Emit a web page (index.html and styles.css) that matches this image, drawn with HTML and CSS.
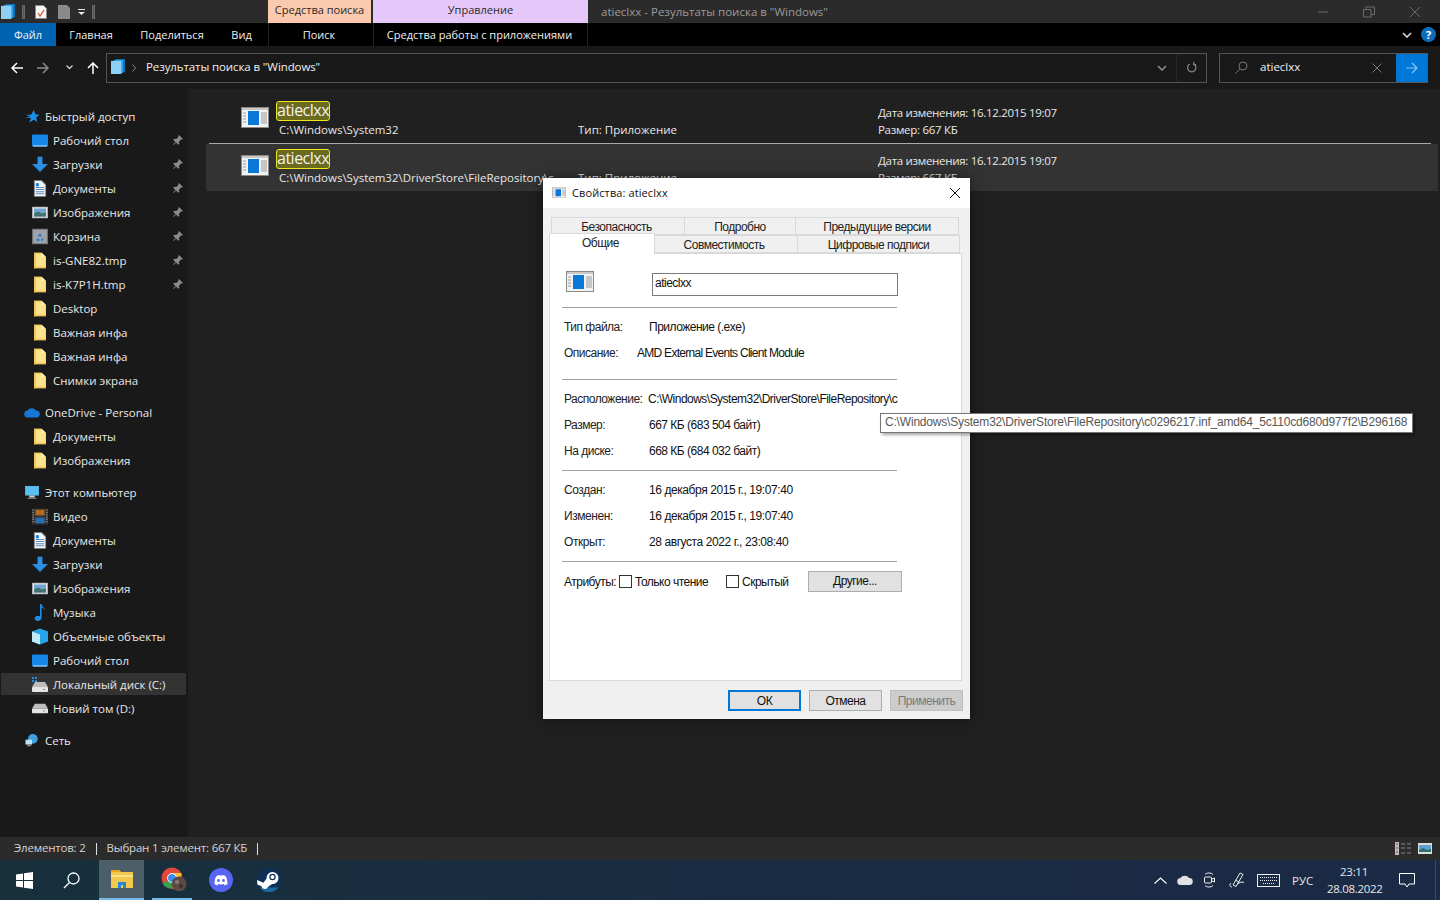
FILE: index.html
```html
<!DOCTYPE html>
<html lang="ru">
<head>
<meta charset="utf-8">
<title>Результаты поиска</title>
<link rel="stylesheet" href="styles.css">
</head>
<body>
<svg class="defs" aria-hidden="true">
  <symbol id="app" viewBox="0 0 28 21">
    <rect x="0.5" y="0.5" width="27" height="20" fill="#f2f2f2" stroke="#8a8a8a"/>
    <rect x="1" y="1" width="26" height="2" fill="#c9c9c9"/>
    <rect x="7" y="4" width="11" height="14" fill="#0a78d8"/>
    <path d="M2 6h3M2 9h3M2 12h3M2 15h3M20 6h6M20 8h6M20 10h6M20 12h6M20 14h6M20 16h6" stroke="#9a9a9a"/>
  </symbol>
  <symbol id="folder" viewBox="0 0 16 20">
    <path d="M1 1h9l5 5v13H1z" fill="#fde28c"/>
    <path d="M1 1h9v1H3v17H1z" fill="#f0c050"/>
    <path d="M10 1l5 5h-5z" fill="#fff0bd"/>
    <rect x="1" y="17.500" width="14" height="1.500" fill="#f0c050"/>
  </symbol>
  <symbol id="pin" viewBox="0 0 12 12">
    <path d="M7 1l4 4-1 .6-1 0-2 2.200.3 2-1 1L4 8.600 1.500 11 1 10.500 3.400 8 1.200 5.800l1-1 2 .3L6.400 3V2z" fill="#8c8c8c"/>
  </symbol>
  <symbol id="desk" viewBox="0 0 16 14">
    <rect x="0" y="1" width="16" height="12" rx="1" fill="#1787e8"/>
    <path d="M1 12h14v1H1z" fill="#bfe2ff"/>
  </symbol>
  <symbol id="down" viewBox="0 0 16 16">
    <path d="M5.500 0h5v7.500H16L8 15.500 0 7.500h5.500z" fill="#2d8fe4"/>
  </symbol>
  <symbol id="doc" viewBox="0 0 12 16">
    <path d="M.5.500h7l4 4v11H.5z" fill="#f4f4f4" stroke="#777"/>
    <path d="M2 7h8M2 9h8M2 11h8M2 13h8" stroke="#5a8fc0"/>
    <rect x="2" y="3" width="3" height="3" fill="#1787e8"/>
  </symbol>
  <symbol id="pic" viewBox="0 0 16 12">
    <rect x=".5" y=".5" width="15" height="11" fill="#e8e8e8" stroke="#aaa"/>
    <rect x="2" y="2" width="12" height="8" fill="#6fa7d2"/>
    <path d="M2 7l4-2 4 2 4-1v4H2z" fill="#41706f"/>
  </symbol>
  <symbol id="bin" viewBox="0 0 14 14">
    <rect x=".5" y=".5" width="13" height="13" fill="#a0a4a8" stroke="#6e7174"/>
    <path d="M7 4l2 3H5zM4 9h2.500v2H4zM8 9h2.500L9 11H8z" fill="#1b7fd4"/>
  </symbol>
  <symbol id="hdd" viewBox="0 0 16 10">
    <path d="M3 0h10l3 5H0z" fill="#bdbdbd"/>
    <rect x="0" y="5" width="16" height="5" rx="1" fill="#e5e5e5"/>
    <rect x="11" y="7" width="2" height="1" fill="#4caf50"/>
  </symbol>
  <symbol id="stack" viewBox="0 0 16 16">
    <rect x="5" y="0" width="10" height="14" fill="#0d6fb8"/>
    <rect x="3" y="1" width="10" height="14" fill="#2d9be6"/>
    <rect x="0" y="2" width="11" height="14" fill="#8fd0f7"/>
  </symbol>
</svg>

<div class="screen">
  <header class="titlebar">
    <div class="qat">
      <svg class="i16" viewBox="0 0 16 16"><use href="#stack"/></svg>
      <span class="qat-sep"></span>
      <svg class="qat-doc" viewBox="0 0 12 14"><path d="M.5.500h8l3 3v10H.5z" fill="#f6f6f6" stroke="#888"/><path d="M3 8l2 3 4-6" fill="none" stroke="#e2562b" stroke-width="1.300"/></svg>
      <svg class="qat-doc" viewBox="0 0 12 14"><path d="M0 0h9l3 3v11H0z" fill="#8a8a8a"/></svg>
      <svg class="qat-more" viewBox="0 0 7 6"><path d="M0 0h7v1H0zM0 3h7L3.500 6z" fill="#e8e8e8"/></svg>
      <span class="qat-sep"></span>
    </div>
    <div class="ctx ctx-search">Средства поиска</div>
    <div class="ctx ctx-manage">Управление</div>
    <div class="win-title">atieclxx - Результаты поиска в "Windows"</div>
    <div class="win-ctrls">
      <svg class="ctl" viewBox="0 0 12 12"><path d="M1 6h10" stroke="#6b6b6b"/></svg>
      <svg class="ctl" viewBox="0 0 12 12"><path d="M.5 3.500h7.500v7.500H.5zM3 3.500V1h8.500v7.500H8" fill="none" stroke="#6b6b6b"/></svg>
      <svg class="ctl" viewBox="0 0 12 12"><path d="M1 1l10 10M11 1L1 11" stroke="#6b6b6b"/></svg>
    </div>
  </header>

  <nav class="ribbon">
    <div class="rtab rtab-file">Файл</div>
    <div class="rtab rtab-home">Главная</div>
    <div class="rtab rtab-share">Поделиться</div>
    <div class="rtab rtab-view">Вид</div>
    <div class="rtab rtab-find">Поиск</div>
    <div class="rtab rtab-tools">Средства работы с приложениями</div>
    <div class="ribbon-right">
      <svg class="chev" viewBox="0 0 10 6"><path d="M1 1l4 4 4-4" fill="none" stroke="#d8d8d8" stroke-width="1.600"/></svg>
      <span class="help">?</span>
    </div>
  </nav>

  <div class="addr-bar">
    <div class="nav-btns">
      <svg class="arrow" viewBox="0 0 12 12"><path d="M12 6H1M6 1L1 6l5 5" fill="none" stroke="#fff" stroke-width="1.500"/></svg>
      <svg class="arrow arrow-fwd" viewBox="0 0 12 12"><path d="M0 6h11M6 1l5 5-5 5" fill="none" stroke="#8a8a8a" stroke-width="1.500"/></svg>
      <svg class="arrow-drop" viewBox="0 0 7 5"><path d="M.5.500l3 3 3-3" fill="none" stroke="#d0d0d0" stroke-width="1.300"/></svg>
      <svg class="arrow arrow-up" viewBox="0 0 12 12"><path d="M6 12V1M1 6l5-5 5 5" fill="none" stroke="#fff" stroke-width="1.500"/></svg>
    </div>
    <div class="addr">
      <svg class="addr-icon" viewBox="0 0 16 16"><use href="#stack"/></svg>
      <svg class="addr-sep" viewBox="0 0 4 8"><path d="M.5.500L3.500 4l-3 3.500" fill="none" stroke="#8a8a8a"/></svg>
      <span class="addr-text">Результаты поиска в "Windows"</span>
      <svg class="addr-drop" viewBox="0 0 10 6"><path d="M1 1l4 4 4-4" fill="none" stroke="#8a8a8a" stroke-width="1.600"/></svg>
      <span class="addr-refresh"><svg viewBox="0 0 12 12"><path d="M4 2.300a4.500 4.500 0 1 0 4.500 0M8.500 0v2.800H11" fill="none" stroke="#8a8a8a" stroke-width="1.300"/></svg></span>
    </div>
    <div class="search">
      <svg class="search-icon" viewBox="0 0 13 13"><circle cx="8" cy="5" r="4" fill="none" stroke="#777"/><path d="M5 8l-4.500 4.500" stroke="#777"/></svg>
      <span class="search-text">atieclxx</span>
      <svg class="search-x" viewBox="0 0 10 10"><path d="M.5.500l9 9M9.500.500l-9 9" stroke="#777"/></svg>
      <span class="search-go"><svg viewBox="0 0 12 12"><path d="M0 6h11M6 1l5 5-5 5" fill="none" stroke="#8cc4f2" stroke-width="1.200"/></svg></span>
    </div>
  </div>

  <div class="body">
    <aside class="sidebar">
      <div class="group">
        <div class="tree head"><svg class="hi" viewBox="0 0 16 14"><path d="M10 0l1.500 4.500L16 5l-3.500 3 1.200 5L10 10.500 5 13.500l2-5-7-.5 6-.8L1.500 5 7 5z" fill="#1f8fe8"/></svg><span>Быстрый доступ</span></div>
        <div class="tree"><svg class="si" viewBox="0 0 16 14"><use href="#desk"/></svg><span class="lbl">Рабочий стол</span><svg class="pin" viewBox="0 0 12 12"><use href="#pin"/></svg></div>
        <div class="tree"><svg class="si" viewBox="0 0 16 16"><use href="#down"/></svg><span class="lbl">Загрузки</span><svg class="pin" viewBox="0 0 12 12"><use href="#pin"/></svg></div>
        <div class="tree"><svg class="si" viewBox="0 0 12 16"><use href="#doc"/></svg><span class="lbl">Документы</span><svg class="pin" viewBox="0 0 12 12"><use href="#pin"/></svg></div>
        <div class="tree"><svg class="si" viewBox="0 0 16 12"><use href="#pic"/></svg><span class="lbl">Изображения</span><svg class="pin" viewBox="0 0 12 12"><use href="#pin"/></svg></div>
        <div class="tree"><svg class="si" viewBox="0 0 14 14"><use href="#bin"/></svg><span class="lbl">Корзина</span><svg class="pin" viewBox="0 0 12 12"><use href="#pin"/></svg></div>
        <div class="tree"><svg class="si" viewBox="0 0 16 20"><use href="#folder"/></svg><span class="lbl">is-GNE82.tmp</span><svg class="pin" viewBox="0 0 12 12"><use href="#pin"/></svg></div>
        <div class="tree"><svg class="si" viewBox="0 0 16 20"><use href="#folder"/></svg><span class="lbl">is-K7P1H.tmp</span><svg class="pin" viewBox="0 0 12 12"><use href="#pin"/></svg></div>
        <div class="tree"><svg class="si" viewBox="0 0 16 20"><use href="#folder"/></svg><span class="lbl">Desktop</span></div>
        <div class="tree"><svg class="si" viewBox="0 0 16 20"><use href="#folder"/></svg><span class="lbl">Важная инфа</span></div>
        <div class="tree"><svg class="si" viewBox="0 0 16 20"><use href="#folder"/></svg><span class="lbl">Важная инфа</span></div>
        <div class="tree"><svg class="si" viewBox="0 0 16 20"><use href="#folder"/></svg><span class="lbl">Снимки экрана</span></div>
      </div>
      <div class="group">
        <div class="tree head"><svg class="hi" viewBox="0 0 16 10"><path d="M4 10a3.500 3.500 0 0 1-.5-7A5 5 0 0 1 12 3a3.500 3.500 0 0 1 .5 7z" fill="#1478d4"/></svg><span>OneDrive - Personal</span></div>
        <div class="tree"><svg class="si" viewBox="0 0 16 20"><use href="#folder"/></svg><span class="lbl">Документы</span></div>
        <div class="tree"><svg class="si" viewBox="0 0 16 20"><use href="#folder"/></svg><span class="lbl">Изображения</span></div>
      </div>
      <div class="group">
        <div class="tree head"><svg class="hi" viewBox="0 0 16 15"><rect x="0" y="0" width="16" height="11" fill="#58c0f0"/><path d="M5 11h6v2H5zM3 13.500h10v1H3z" fill="#cfd6da"/></svg><span>Этот компьютер</span></div>
        <div class="tree"><svg class="si" viewBox="0 0 14 14"><rect width="14" height="14" fill="#333"/><rect x="3" y="1" width="8" height="5" fill="#b4691f"/><rect x="3" y="8" width="8" height="5" fill="#2a6fb0"/><path d="M1 1v12M13 1v12" stroke="#999" stroke-width="1.200" stroke-dasharray="1 1"/></svg><span class="lbl">Видео</span></div>
        <div class="tree"><svg class="si" viewBox="0 0 12 16"><use href="#doc"/></svg><span class="lbl">Документы</span></div>
        <div class="tree"><svg class="si" viewBox="0 0 16 16"><use href="#down"/></svg><span class="lbl">Загрузки</span></div>
        <div class="tree"><svg class="si" viewBox="0 0 16 12"><use href="#pic"/></svg><span class="lbl">Изображения</span></div>
        <div class="tree"><svg class="si" viewBox="0 0 12 16"><path d="M6 0h1.500c0 3 3.500 3.500 3.500 7 0-2-2-3-3.500-3.500V13c0 1.800-1.600 3-3.500 3S1 15 1 13.500 2.500 11 4 11c.8 0 1.500.2 2 .5z" fill="#1b8fe6"/></svg><span class="lbl">Музыка</span></div>
        <div class="tree"><svg class="si" viewBox="0 0 16 16"><path d="M8 0l8 3v10l-8 3-8-3V3z" fill="#28a4e8"/><path d="M0 3l8 3v10l-8-3z" fill="#bfe9f7"/></svg><span class="lbl">Объемные объекты</span></div>
        <div class="tree"><svg class="si" viewBox="0 0 16 14"><use href="#desk"/></svg><span class="lbl">Рабочий стол</span></div>
        <div class="tree current"><svg class="si" viewBox="0 0 16 15"><path d="M0 0h2v2H0zM3 0h2v2H3zM0 3h2v2H0zM3 3h2v2H3z" fill="#1f8fe8"/><g transform="translate(0 5)"><use href="#hdd" width="16" height="10"/></g></svg><span class="lbl">Локальный диск (C:)</span></div>
        <div class="tree"><svg class="si" viewBox="0 0 16 10"><use href="#hdd"/></svg><span class="lbl">Новий том (D:)</span></div>
      </div>
      <div class="group">
        <div class="tree head"><svg class="hi" viewBox="0 0 16 16"><circle cx="9" cy="6" r="6" fill="#3f9fe0"/><rect x="0" y="7" width="8" height="6" fill="#bfe0f5"/><path d="M2 14h5v1H2z" fill="#ccc"/></svg><span>Сеть</span></div>
      </div>
    </aside>

    <main class="results">
      <div class="item">
        <svg class="item-icon" viewBox="0 0 28 21"><use href="#app"/></svg>
        <div class="item-name"><mark class="hit">atieclxx</mark><div class="item-path">C:\Windows\System32</div></div>
        <div class="item-type">Тип: Приложение</div>
        <div class="item-meta"><div>Дата изменения: 16.12.2015 19:07</div><div>Размер: 667 КБ</div></div>
      </div>
      <div class="item-line"></div>
      <div class="item item-selected">
        <svg class="item-icon" viewBox="0 0 28 21"><use href="#app"/></svg>
        <div class="item-name"><mark class="hit">atieclxx</mark><div class="item-path">C:\Windows\System32\DriverStore\FileRepository\c</div></div>
        <div class="item-type">Тип: Приложение</div>
        <div class="item-meta"><div>Дата изменения: 16.12.2015 19:07</div><div>Размер: 667 КБ</div></div>
      </div>
    </main>
  </div>

  <footer class="status">
    <span class="st-count">Элементов: 2</span>
    <span class="st-sep"></span>
    <span class="st-sel">Выбран 1 элемент: 667 КБ</span>
    <span class="st-sep"></span>
    <div class="st-views">
      <svg class="st-list" viewBox="0 0 16 13"><rect x="0" y="0" width="4" height="13" fill="#bbb"/><path d="M1 2h2M1 6h2M1 10h2" stroke="#a33"/><path d="M6 2h4M12 2h4M6 6h4M12 6h4M6 11h4M12 11h4" stroke="#888"/></svg>
      <svg class="st-pic" viewBox="0 0 14 11"><rect width="14" height="11" fill="#ddd"/><rect x="1" y="2" width="12" height="7" fill="#5fa0cf"/><path d="M1 7l4-2 4 2 4-1v3H1z" fill="#2e6f6f"/></svg>
    </div>
  </footer>

  <div class="taskbar">
    <div class="tb-btn"><svg class="ti-win" viewBox="0 0 17 17"><path d="M0 2.400l7-1V8H0zM8 1.300L17 0v8H8zM0 9h7v6.600l-7-1zM8 9h9v8l-9-1.300z" fill="#fff"/></svg></div>
    <div class="tb-btn tb-search"><svg class="ti-s" viewBox="0 0 17 17"><circle cx="10.500" cy="6.500" r="5.500" fill="none" stroke="#fff" stroke-width="1.300"/><path d="M6.500 10.500L1 16" stroke="#fff" stroke-width="1.500"/></svg></div>
    <div class="tb-app tb-active"><svg class="ti-app" viewBox="0 0 22 20"><path d="M0 1h8l2 2h12v16H0z" fill="#f4c84f"/><path d="M0 1h8l2 2H0z" fill="#e7a820"/><rect x="0" y="6" width="22" height="2" fill="#fbe08a"/><path d="M7 19v-6h8v6h-3v-3H10v3z" fill="#2a87d0"/></svg></div>
    <div class="tb-app tb-open"><svg class="ti-chrome" viewBox="0 0 26 24"><circle cx="11" cy="11" r="10.500" fill="#e3493a"/><path d="M11 11L1.500 16.500A10.500 10.500 0 0 0 11 21.500z" fill="#3aa04a"/><path d="M11 11l9.500 5.500A10.500 10.500 0 0 1 11 21.500zM11 6h9l.7 2L15 14z" fill="#f5c431"/><circle cx="11" cy="11" r="4.500" fill="#3f8df0" stroke="#fff"/><circle cx="18" cy="17" r="7.500" fill="#5b4a45"/><circle cx="16" cy="15" r="2" fill="#8a7a72"/><circle cx="20" cy="19" r="2" fill="#3c302d"/></svg></div>
    <div class="tb-app tb-disc"><svg class="ti-round" viewBox="0 0 24 24"><circle cx="12" cy="12" r="12" fill="#5865f2"/><path d="M5.500 16C5.500 11 7 8 8.500 7.500c1-.4 2-.6 2.500-.6l.5.8h1l.5-.8c.5 0 1.500.2 2.500.6C17 8 18.500 11 18.500 16c-1 1-2.500 1.300-3 1.300l-.8-1.300c-1.600.5-3.800.5-5.400 0l-.8 1.300c-.5 0-2-.3-3-1.300z" fill="#fff"/><circle cx="9.500" cy="12.500" r="1.400" fill="#5865f2"/><circle cx="14.500" cy="12.500" r="1.400" fill="#5865f2"/></svg></div>
    <div class="tb-app tb-steam"><svg class="ti-round" viewBox="0 0 24 24"><circle cx="12" cy="12" r="12" fill="#0d2f58"/><path d="M2.500 19.500A12 12 0 0 0 21.500 19.500z" fill="#1c6aa0"/><path d="M0 12l6.500 2.800 3-4.300A6 6 0 1 1 15 16l-4 3a3.500 3.500 0 0 1-6.600-.8L.4 16.500z" fill="#fff"/><circle cx="15.500" cy="9" r="3.200" fill="#0d2f58"/><circle cx="15.500" cy="9" r="2" fill="#fff"/></svg></div>
    <div class="tray">
      <svg class="tr-up" viewBox="0 0 13 7"><path d="M.5 6.500L6.500 1l6 5.500" fill="none" stroke="#fff" stroke-width="1.100"/></svg>
      <svg class="tr-cloud" viewBox="0 0 16 10"><path d="M4 10a3.500 3.500 0 0 1-.5-7A5 5 0 0 1 12 3a3.500 3.500 0 0 1 .5 7z" fill="#e2e2e2"/></svg>
      <svg class="tr-cam" viewBox="0 0 11 16"><path d="M1 2.500C3 .5 7 .5 9 2.500M1 13.500c2 2 6 2 8 0" fill="none" stroke="#eee"/><rect x=".5" y="5" width="7" height="6" rx="1" fill="none" stroke="#eee"/><path d="M8 7l2.500-1v4L8 9" fill="none" stroke="#eee"/></svg>
      <svg class="tr-pen" viewBox="0 0 16 16"><path d="M3 15c-2 0-3-2-1-4M4 13L11 1l3 1.500L7 14.500zM8 12l4-2 3 .5M6 8l4 2" fill="none" stroke="#eee"/></svg>
      <svg class="tr-kb" viewBox="0 0 23 13"><rect x=".5" y=".5" width="22" height="12" fill="none" stroke="#eee"/><path d="M3 3.500h17M3 6.500h17M6 9.500h11" stroke="#eee" stroke-dasharray="1 1"/></svg>
      <span class="tr-lang">РУС</span>
      <div class="clock"><div>23:11</div><div>28.08.2022</div></div>
      <svg class="tr-note" viewBox="0 0 16 15"><path d="M.5.500h15v10.500h-5.500L8 14 6 11H.5z" fill="none" stroke="#fff"/></svg>
      <span class="tr-show"></span>
    </div>
  </div>

  <section class="dialog">
    <div class="dlg-title">
      <svg class="dlg-ic" viewBox="0 0 28 21"><use href="#app"/></svg>
      <span class="dlg-cap">Свойства: atieclxx</span>
      <svg class="dlg-x" viewBox="0 0 10 10"><path d="M0 0l10 10M10 0L0 10" stroke="#111" stroke-width="1"/></svg>
    </div>
    <div class="dlg-tabs">
      <div class="tabrow tabrow-back">
        <div class="tab t-sec">Безопасность</div>
        <div class="tab t-det">Подробно</div>
        <div class="tab t-prev">Предыдущие версии</div>
      </div>
      <div class="tabrow tabrow-front">
        <div class="tab tab-on">Общие</div>
        <div class="tab t-comp">Совместимость</div>
        <div class="tab t-sig">Цифровые подписи</div>
      </div>
    </div>
    <div class="panel">
      <div class="name-row">
        <svg class="big-ic" viewBox="0 0 28 21"><use href="#app"/></svg>
        <div class="name-box">atieclxx</div>
      </div>
      <hr class="rule">
      <div class="pgroup pg-type">
        <div class="prow"><span class="plabel">Тип файла:</span><span>Приложение (.exe)</span></div>
        <div class="prow"><span class="plabel pl-desc">Описание:</span><span class="pv-desc">AMD External Events Client Module</span></div>
      </div>
      <hr class="rule">
      <div class="pgroup pg-loc">
        <div class="prow"><span class="plabel pl-loc">Расположение:</span><span class="pv-loc">C:\Windows\System32\DriverStore\FileRepository\c</span></div>
        <div class="prow"><span class="plabel">Размер:</span><span>667 КБ (683 504 байт)</span></div>
        <div class="prow"><span class="plabel">На диске:</span><span>668 КБ (684 032 байт)</span></div>
      </div>
      <hr class="rule">
      <div class="pgroup pg-date">
        <div class="prow"><span class="plabel">Создан:</span><span>16 декабря 2015 г., 19:07:40</span></div>
        <div class="prow"><span class="plabel">Изменен:</span><span>16 декабря 2015 г., 19:07:40</span></div>
        <div class="prow"><span class="plabel">Открыт:</span><span>28 августа 2022 г., 23:08:40</span></div>
      </div>
      <hr class="rule">
      <div class="attrs">
        <span class="attr-label">Атрибуты:</span>
        <span class="cb"></span><span class="cb-text cb-ro">Только чтение</span>
        <span class="cb"></span><span class="cb-text cb-hid">Скрытый</span>
        <span class="btn btn-more">Другие...</span>
      </div>
    </div>
    <div class="dlg-btns">
      <span class="btn btn-ok">ОК</span>
      <span class="btn">Отмена</span>
      <span class="btn btn-off">Применить</span>
    </div>
  </section>

  <div class="tip">C:\Windows\System32\DriverStore\FileRepository\c0296217.inf_amd64_5c110cd680d977f2\B296168</div>
</div>
</body>
</html>
```

FILE: styles.css
```css
* { box-sizing: border-box; }
html, body { margin: 0; padding: 0; background: #202020; }
body { font-family: "Open Sans", "Noto Sans", sans-serif; font-size: 11.5px; color: #e8e8e8; }
.defs { position: absolute; width: 0; height: 0; overflow: hidden; }
svg { display: block; flex: none; }

.screen { position: relative; width: 1440px; height: 900px; overflow: hidden; display: flex; flex-direction: column; }

/* Title bar */
.titlebar { height: 23px; background: #2b2b2b; display: flex; align-items: stretch; flex: none; }
.qat { width: 268px; display: flex; align-items: center; padding-left: 1px; }
.i16 { width: 15px; height: 17px; }
.qat-sep { width: 3px; height: 14px; background: #555; border: 1px solid #6a6a6a; border-width: 0 1px; margin-left: 6px; }
.qat-doc { width: 12px; height: 14px; margin-left: 10px; }
.qat-doc + .qat-doc { margin-left: 11px; }
.qat-more { width: 7px; height: 6px; margin-left: 8px; }
.qat-more + .qat-sep { margin-left: 7px; }
.ctx { display: flex; align-items: center; justify-content: center; color: #2a2a2a; font-size: 11px; padding-bottom: 5px; }
.ctx-search { width: 103px; background: #fbc9ae; }
.ctx-manage { width: 215px; margin-left: 2px; background: #e6c7f9; }
.win-title { margin-left: 13px; align-self: center; color: #9a9a9a; }
.win-ctrls { margin-left: auto; display: flex; align-items: center; padding-right: 19px; gap: 34px; }
.ctl { width: 12px; height: 12px; }

/* Ribbon */
.ribbon { height: 23px; background: #000; display: flex; align-items: center; flex: none; position: relative; color: #f0f0f0; font-size: 11px; }
.rtab { height: 23px; display: flex; align-items: center; justify-content: center; }
.rtab-file { width: 56px; background: #0063b1; color: #e8f2fa; }
.rtab-home { margin-left: 14px; width: 42px; }
.rtab-share { margin-left: 29px; width: 62px; }
.rtab-view { margin-left: 29px; width: 19px; }
.rtab-find { margin-left: 17px; width: 105px; border-left: 1px solid #222; padding-right: 4px; }
.rtab-tools { width: 215px; border-left: 1px solid #222; border-right: 1px solid #222; padding-right: 2px; }
.ribbon-right { margin-left: auto; display: flex; align-items: center; gap: 9px; padding-right: 4px; }
.chev { width: 10px; height: 6px; }
.help { width: 15px; height: 15px; border-radius: 50%; background: #0e6cbd; color: #fff; font-weight: 700; font-size: 11px; display: flex; align-items: center; justify-content: center; }

/* Address bar */
.addr-bar { height: 43px; background: #191919; display: flex; align-items: center; flex: none; }
.nav-btns { width: 106px; display: flex; align-items: center; padding-left: 11px; }
.arrow { width: 12px; height: 12px; }
.arrow-fwd { margin-left: 14px; }
.arrow-drop { width: 7px; height: 5px; margin-left: 17px; }
.arrow-up { margin-left: 14px; }
.addr { width: 1101px; height: 30px; border: 1px solid #555; display: flex; align-items: center; padding-left: 4px; }
.addr-icon { width: 15px; height: 15px; margin-top: -3px; }
.addr-sep { width: 4px; height: 8px; margin-left: 6px; }
.addr-text { margin-left: 10px; color: #f0f0f0; padding-bottom: 3px; letter-spacing: -0.1px; }
.addr-drop { width: 10px; height: 6px; margin-left: auto; margin-right: 9px; }
.addr-refresh { width: 30px; height: 28px; border-left: 1px solid #262626; display: flex; align-items: center; justify-content: center; }
.addr-refresh svg { width: 11px; height: 11px; }
.search { width: 209px; height: 30px; margin-left: 12px; border: 1px solid #555; display: flex; align-items: center; padding-left: 15px; }
.search-icon { width: 13px; height: 13px; }
.search-text { margin-left: 12px; color: #f0f0f0; padding-bottom: 3px; }
.search-x { width: 10px; height: 10px; margin-left: auto; margin-right: 14px; }
.search-go { width: 31px; height: 28px; background: #0078d7; display: flex; align-items: center; justify-content: center; }
.search-go svg { width: 12px; height: 12px; }

/* Body */
.body { flex: 1; display: flex; min-height: 0; }
.sidebar { width: 190px; background: #191919; border-right: 2px solid #1f1f1f; padding: 16px 2px 0 1px; display: flex; flex-direction: column; gap: 10px; flex: none; }
.group { display: flex; flex-direction: column; gap: 2px; }
.tree { height: 22px; display: flex; align-items: center; padding-left: 31px; color: #e8e8e8; }
.tree.head { padding-left: 23px; }
.tree.current { background: #333; }
.hi { width: 16px; height: 13px; margin-right: 5px; }
.si { width: 16px; height: 17px; margin-right: 5px; }
.lbl { flex: 1; white-space: nowrap; }
.pin { width: 12px; height: 12px; margin-right: 2px; }

/* Results */
.results { flex: 1; background: #202020; padding: 7px 2px 0 16px; min-width: 0; }
.item { height: 47px; display: flex; align-items: flex-start; padding-left: 35px; }
.item-line { height: 1px; margin: 0 7px 0 3px; background: #a8a8a8; }
.item-selected { height: 47px; background: #333; }
.item-icon { width: 28px; height: 21px; margin-top: 11px; }
.item-name { width: 309px; padding: 5px 0 0 7px; color: #e8e8e8; white-space: nowrap; }
.hit { display: block; width: 54px; height: 20px; background: #6b6a1e; border: 1px solid #f0e71e; border-radius: 3px; color: #f4f4f0; font-size: 16px; line-height: 16px; text-align: center; letter-spacing: -0.5px; }
.item-path { height: 17px; line-height: 17px; margin-left: 3px; }
.item-type { width: 300px; margin-top: 25px; line-height: 17px; }
.item-meta { margin-top: 8px; line-height: 17px; letter-spacing: -0.3px; }

/* Status */
.status { height: 23px; background: #2b2b2b; display: flex; align-items: center; padding-left: 14px; color: #d4d4d4; flex: none; letter-spacing: -0.2px; }
.st-count, .st-sel { padding-bottom: 2px; }
.st-sep { width: 1px; height: 12px; background: #e0e0e0; margin: 0 10px; }
.st-views { margin-left: auto; display: flex; align-items: center; gap: 7px; padding-right: 8px; }
.st-list { width: 16px; height: 13px; }
.st-pic { width: 14px; height: 11px; }

/* Taskbar */
.taskbar { height: 40px; background: linear-gradient(90deg, #17303c 0, #1a2b44 60%, #1b2a45 100%); display: flex; align-items: stretch; flex: none; }
.tb-btn { width: 48px; display: flex; align-items: center; justify-content: center; }
.ti-win { width: 17px; height: 17px; }
.ti-s { width: 17px; height: 17px; }
.tb-search { width: 51px; padding-right: 5px; }
.tb-app { display: flex; align-items: center; justify-content: center; }
.tb-active { width: 45px; background: #4c5f68; border-bottom: 2px solid #76b9ed; margin-right: 8px; }
.tb-open { width: 40px; border-bottom: 2px solid #76b9ed; }
.tb-disc { width: 58px; }
.tb-steam { width: 38px; }
.ti-app { width: 22px; height: 20px; }
.ti-chrome { width: 26px; height: 24px; margin-left: 4px; }
.ti-round { width: 24px; height: 24px; }
.tray { margin-left: auto; display: flex; align-items: center; color: #e8e8e8; }
.tr-up { width: 13px; height: 7px; }
.tr-cloud { width: 16px; height: 10px; margin-left: 10px; }
.tr-cam { width: 11px; height: 16px; margin-left: 11px; }
.tr-pen { width: 16px; height: 16px; margin-left: 14px; }
.tr-kb { width: 23px; height: 13px; margin-left: 12px; }
.tr-lang { width: 22px; margin-left: 12px; white-space: nowrap; }
.clock { width: 54px; margin-left: 13px; text-align: center; line-height: 17px; letter-spacing: -0.3px; white-space: nowrap; }
.tr-note { width: 16px; height: 15px; margin-left: 18px; }
.tr-show { width: 1px; height: 40px; margin-left: 20px; margin-right: 4px; background: #3a4a60; }

/* Dialog */
.dialog { position: absolute; left: 543px; top: 178px; width: 427px; height: 541px; background: #f0f0f0; color: #111; font-family: "Liberation Sans", Arial, sans-serif; font-size: 12px; letter-spacing: -0.5px; display: flex; flex-direction: column; box-shadow: 0 0 12px rgba(0,0,0,.5); }
.dlg-title { height: 30px; background: #fff; display: flex; align-items: center; padding: 0 0 1px 9px; flex: none; }
.dlg-ic { width: 14px; height: 11px; }
.dlg-cap { margin-left: 6px; letter-spacing: 0.1px; color: #111; font-family: "Open Sans", sans-serif; font-size: 11px; padding-bottom: 1px; }
.dlg-x { width: 10px; height: 10px; margin-left: auto; margin-right: 10px; }
.dlg-tabs { height: 45px; padding: 9px 0 0 6px; position: relative; flex: none; }
.tabrow { display: flex; height: 18px; }
.tab { display: flex; align-items: center; justify-content: center; background: #f0f0f0; border: 1px solid #d9d9d9; border-right: 0; color: #222; padding-top: 2px; }
.tabrow > .tab:last-child { border-right: 1px solid #d9d9d9; }
.tabrow-back { padding-left: 2px; }
.t-sec { width: 133px; padding-right: 3px; }
.t-det { width: 111px; }
.t-prev { width: 164px; }
.t-comp { width: 143px; padding-right: 4px; }
.t-sig { width: 163px; }
.tab-on { width: 105px; height: 21px; margin-top: -2px; background: #fff; border-bottom: 0; position: relative; z-index: 1; padding: 0 3px 2px 0; }
.panel { width: 413px; height: 428px; margin-left: 6px; background: #fff; border: 1px solid #d9d9d9; padding: 0 12px; flex: none; }
.name-row { height: 53px; display: flex; align-items: flex-start; padding-left: 4px; }
.big-ic { width: 28px; height: 21px; margin-top: 17px; }
.name-box { width: 246px; height: 23px; margin: 19px 0 0 58px; border: 1px solid #7a7a7a; line-height: 19px; padding-left: 2px; }
.rule { height: 1px; margin: 0; border: 0; background: #a0a0a0; width: 335px; }
.pgroup { padding-left: 2px; }
.pg-type { height: 71px; padding-top: 6px; }
.pg-loc { height: 90px; padding-top: 6px; }
.pg-date { height: 90px; padding-top: 6px; letter-spacing: -0.42px; }
.prow { display: flex; height: 26px; align-items: center; white-space: nowrap; }
.plabel { width: 85px; flex: none; color: #222; }
.pl-desc { width: 73px; }
.pl-loc { width: 84px; }
.pv-desc { letter-spacing: -0.72px; }
.pv-loc { letter-spacing: -0.52px; }
.attrs { display: flex; align-items: center; padding: 8px 0 0 2px; height: 30px; }
.attr-label { width: 55px; flex: none; padding-top: 2px; }
.cb { width: 13px; height: 13px; border: 1px solid #333; background: #fff; flex: none; }
.cb-text { margin-left: 3px; flex: none; padding-top: 2px; }
.cb-ro { width: 88px; margin-right: 3px; }
.cb-hid { width: 66px; }
.btn { width: 73px; height: 21px; display: flex; align-items: center; justify-content: center; background: #e1e1e1; border: 1px solid #adadad; color: #111; flex: none; }
.btn-more { width: 94px; }
.dlg-btns { display: flex; justify-content: flex-end; gap: 8px; padding: 9px 7px 0 0; }
.btn-ok { border: 2px solid #0078d7; }
.btn-off { background: #ccc; border-color: #bfbfbf; color: #7a7a7a; }

/* Tooltip */
.tip { position: absolute; left: 880px; top: 413px; width: 533px; height: 20px; background: #fff; border: 1px solid #767676; color: #575757; font-family: "Liberation Sans", Arial, sans-serif; font-size: 12px; letter-spacing: -0.19px; line-height: 16px; padding-left: 4px; white-space: nowrap; box-shadow: 2px 2px 3px rgba(0,0,0,.35); }
```
